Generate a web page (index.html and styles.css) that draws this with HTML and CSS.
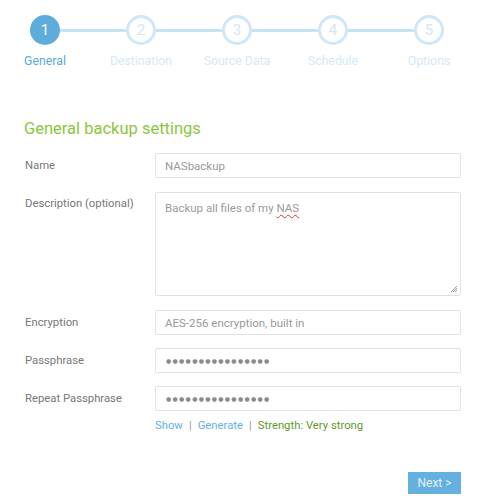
FILE: index.html
```html
<!DOCTYPE html>
<html>
<head>
<meta charset="utf-8">
<link rel="stylesheet" href="styles.css">
</head>
<body>
<div class="page">
  <div class="stepper">
    <div class="circles">
      <div class="circle active">1</div>
      <div class="line"></div>
      <div class="circle">2</div>
      <div class="line"></div>
      <div class="circle">3</div>
      <div class="line"></div>
      <div class="circle">4</div>
      <div class="line"></div>
      <div class="circle">5</div>
    </div>
    <div class="labels">
      <div class="label active">General</div>
      <div class="label">Destination</div>
      <div class="label">Source Data</div>
      <div class="label">Schedule</div>
      <div class="label">Options</div>
    </div>
  </div>

  <h1 class="title">General backup settings</h1>

  <div class="form">
    <div class="row r14">
      <div class="flabel">Name</div>
      <div class="field">NASbackup</div>
    </div>
    <div class="row r14 top">
      <div class="flabel">Description (optional)</div>
      <div class="field area">Backup all files of my <span class="spell">NAS</span>
        <svg class="grip" width="8" height="8" viewBox="0 0 8 8"><path d="M7 1L1 7M7 3L3 7M7 5L5 7" stroke="#9a9a9a" stroke-width="1"/></svg>
      </div>
    </div>
    <div class="row r13">
      <div class="flabel">Encryption</div>
      <div class="field">AES-256 encryption, built in</div>
    </div>
    <div class="row r13">
      <div class="flabel">Passphrase</div>
      <div class="field dots">●●●●●●●●●●●●●●●●</div>
    </div>
    <div class="row">
      <div class="flabel">Repeat Passphrase</div>
      <div class="field dots">●●●●●●●●●●●●●●●●</div>
    </div>
    <div class="links">
      <span class="link">Show</span><span class="sep">|</span><span class="link">Generate</span><span class="sep">|</span><span class="strength">Strength: Very strong</span>
    </div>
  </div>

  <div class="actions">
    <div class="next">Next &gt;</div>
  </div>
</div>
</body>
</html>
```
FILE: styles.css
```css
* { box-sizing: border-box; }
html, body { margin: 0; padding: 0; background: #fff; }
body { font-family: Roboto, "Liberation Sans", sans-serif; color: #777; }
.page { width: 481px; height: 500px; padding: 0 20px 0 24px; }

.stepper { padding-top: 15px; }
.circles { display: flex; align-items: center; padding-left: 6px; }
.circle {
  width: 30px; height: 30px; border-radius: 50%;
  border: 3px solid #cfe7f8; color: #cfe7f8; background: #fff;
  display: flex; align-items: center; justify-content: center;
  font-size: 15px; flex: none;
}
.circle.active { background: #5dacdc; border-color: #5dacdc; color: #fff; }
.line { width: 66px; height: 3px; background: #c6e3f6; flex: none; }
.labels { display: flex; margin-left: -27px; margin-top: 8px; }
.label { width: 96px; flex: none; text-align: center; font-size: 12.3px; color: #d3e9f8; line-height: 16px; }
.label.active { color: #5aa8d9; }

.title { font-weight: normal; font-size: 16.5px; color: #8cc63e; margin: 49px 0 0 0; line-height: 22px; }

.form { margin-top: 13px; }
.row { display: flex; align-items: center; }
.row.top { align-items: flex-start; }
.r14 { margin-bottom: 14px; }
.r13 { margin-bottom: 13px; }
.flabel { width: 131px; font-size: 11.3px; color: #777; flex: none; padding-left: 1px; }
.row.top .flabel { padding-top: 5px; }
.field {
  width: 306px; height: 25px; border: 1px solid #e2e2e2; border-radius: 2px;
  font-size: 11.5px; color: #9a9a9a; padding: 0 9px; display: flex; align-items: center;
}
.field.area { height: 104px; display: block; padding-top: 8px; position: relative; }
.spell { text-decoration: underline wavy #e03030; text-decoration-thickness: 1px; text-underline-offset: 2px; }
.grip { position: absolute; right: 2px; bottom: 2px; }
.dots { color: #8a8a8a; font-family: "DejaVu Sans", sans-serif; font-size: 6px; letter-spacing: 1.3px; padding-left: 10px; }
.links { margin-left: 131px; margin-top: 7px; font-size: 11.3px; line-height: 16px; }
.link { color: #62b1e3; }
.sep { color: #999; margin: 0 6px; }
.strength { color: #5e9a28; }

.actions { display: flex; justify-content: flex-end; margin-top: 38px; }
.next {
  width: 53px; height: 22px; background: #64b0de; color: #e4f2fb;
  font-size: 12px; display: flex; align-items: center; justify-content: center;
}
```
